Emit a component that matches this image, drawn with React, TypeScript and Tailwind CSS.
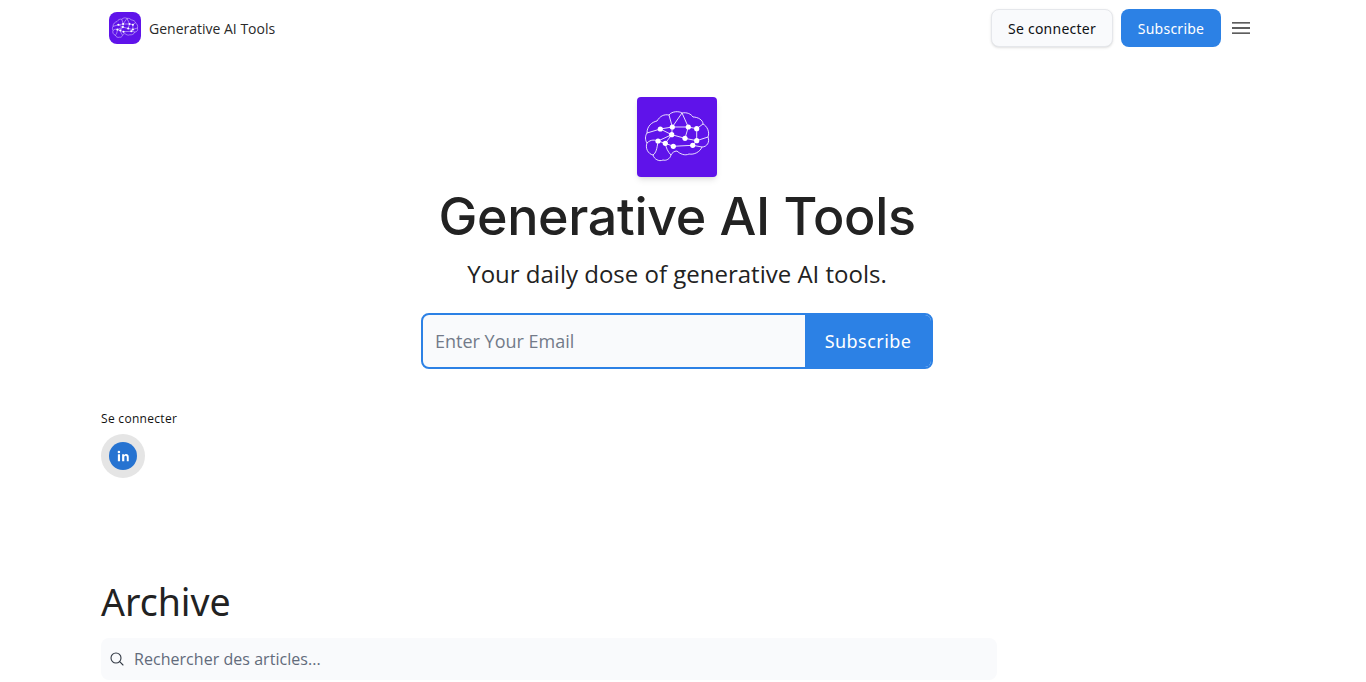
const nodes: [number, number][] = [
  [23.3, 32], [35.3, 30], [51.3, 30], [59.7, 31.7], [34.7, 37.7], [48, 41.3],
  [21, 44], [28.3, 46.3], [36.3, 49.3], [59.7, 43.7], [55.7, 48.3],
];
const links: [number, number][] = [
  [0, 1], [1, 2], [2, 3], [0, 4], [1, 4], [4, 5], [5, 2], [5, 9], [9, 10],
  [6, 7], [7, 8], [8, 10], [4, 6], [3, 9], [4, 7],
];

function Brain({ stroke, r }: { stroke: number; r: number }) {
  return (
    <svg viewBox="0 0 80 80" className="w-full h-full">
      <g fill="none" stroke="#fff" strokeOpacity="0.85" strokeWidth={stroke} strokeLinejoin="round">
        <path d="M10 36 C10 29 15 25 20 24 C23 19 27 17 32 18 C35 14 42 14 45 16 C50 15 54 17 56 20 C61 20 66 23 66 27 C70 29 73 35 71 40 C73 45 70 50 65 50 C63 55 57 58 52 57 C48 59 43 57 40 54 C37 54 35 56 34 58 C33 62 29 64 26 63 C22 65 17 62 16 58 C11 57 8 51 10 46 C8 43 8 39 10 36 Z" />
        <path d="M10 36 L23.3 32 M10 46 C14 42 18 43 21 44 M16 58 C19 56 20 52 21 44 M34 58 C31 55 29 51 28.3 46.3 M45 16 L35.3 30 M32 18 L35.3 30 M45 16 L51.3 30 M66 27 L59.7 31.7 M71 40 L59.7 43.7 M65 50 L55.7 48.3" />
        {links.map(([a, b], i) => (
          <line key={i} x1={nodes[a][0]} y1={nodes[a][1]} x2={nodes[b][0]} y2={nodes[b][1]} />
        ))}
      </g>
      {nodes.map(([x, y], i) => (
        <circle key={i} cx={x} cy={y} r={r} fill="#fff" />
      ))}
    </svg>
  );
}

export default function App() {
  return (
    <div className="w-[1354px] h-[682px] overflow-hidden bg-white text-[#222222] font-['Open_Sans','Noto_Sans',sans-serif]">
      <header className="h-[56px] pl-[109px] pr-[104px] flex items-center justify-between">
        <div className="flex items-center gap-2">
          <div className="w-8 h-8 rounded-lg bg-[#5f13ea] overflow-hidden">
            <Brain stroke={1.3} r={2.6} />
          </div>
          <span className="mt-[2px] text-sm text-[#2a2a2a]">Generative AI Tools</span>
        </div>
        <div className="flex items-center gap-2">
          <button className="h-[38px] w-[122px] pt-[1px] rounded-lg bg-[#f9fafc] border border-[#e5e7eb] shadow-sm text-sm font-normal tracking-[0.25px] text-[#0f1115] font-['Noto_Sans',sans-serif]">
            Se connecter
          </button>
          <button className="h-[38px] w-[100px] pt-[1px] rounded-lg bg-[#2c81e5] text-sm font-normal tracking-[0.25px] text-white font-['Noto_Sans',sans-serif]">
            Subscribe
          </button>
          <svg viewBox="0 0 18 12" className="ml-[3px] w-[18px] h-3" fill="none" stroke="#2a2a2a" strokeWidth="1.4">
            <path d="M0 .9H18M0 6H18M0 11.1H18" />
          </svg>
        </div>
      </header>

      <section className="pt-[41px] flex flex-col items-center">
        <div className="w-20 h-20 rounded-[4px] bg-[#5f13ea] shadow-md overflow-hidden">
          <Brain stroke={1} r={2.6} />
        </div>
        <h1 className="mt-[2px] h-[76px] leading-[76px] text-[52px] font-medium tracking-[-0.33px] text-[#222222] font-['Inter','Lato',sans-serif]">
          Generative AI Tools
        </h1>
        <p className="h-[38px] leading-[38px] text-[24px] text-[#222222]">
          Your daily dose of generative AI tools.
        </p>
        <form className="mt-[20px] w-[512px] h-[56px] flex rounded-lg overflow-hidden border-2 border-[#2c81e5] bg-[#f9fafc]">
          <input
            className="flex-1 min-w-0 bg-transparent px-3 text-lg text-[#222222] outline-none placeholder:text-[#737a89]"
            placeholder="Enter Your Email"
          />
          <button type="button" className="w-[126px] bg-[#2c81e5] text-lg font-normal tracking-[0.45px] text-white font-['Noto_Sans',sans-serif]">
            Subscribe
          </button>
        </form>
      </section>

      <section className="pl-[101px] mt-[40px]">
        <p className="text-xs leading-5 tracking-[0.3px] text-[#111111]">Se connecter</p>
        <div className="mt-[5px] w-11 h-11 rounded-full bg-[#e5e5e5] flex items-center justify-center">
          <div className="w-7 h-7 rounded-full bg-[#2673d1] flex items-center justify-center text-white">
            <svg viewBox="0 0 24 24" className="w-[14px] h-[14px]" fill="currentColor">
              <path d="M6.9 8.8H3.2V21h3.7V8.8ZM5 3a2.2 2.2 0 1 0 0 4.4A2.2 2.2 0 0 0 5 3Zm16.8 10.6c0-3.4-1.8-5-4.3-5-2 0-2.9 1.1-3.4 1.9V8.8H10.5V21h3.7v-6.4c0-1.7.4-3.2 2.3-3.2s2 1.800 2 3.300V21h3.300v-7.400Z" />
            </svg>
          </div>
        </div>
      </section>

      <section className="pl-[101px] mt-[100px]">
        <h2 className="h-[50px] leading-[48px] text-[37.5px] font-normal text-[#222222] font-['Noto_Sans',sans-serif]">Archive</h2>
        <div className="mt-[10px] w-[896px] h-[42px] rounded-lg bg-[#f9fafc] flex items-center pl-[8px] gap-[9px]">
          <svg viewBox="0 0 16 16" className="w-4 h-4" fill="none" stroke="#333a45" strokeWidth="1.1" strokeLinecap="round">
            <circle cx="7" cy="7" r="5" />
            <path d="M10.7 10.7 14 14" />
          </svg>
          <span className="text-base tracking-[0.04px] text-[#626b7b]">Rechercher des articles...</span>
        </div>
      </section>
    </div>
  );
}
